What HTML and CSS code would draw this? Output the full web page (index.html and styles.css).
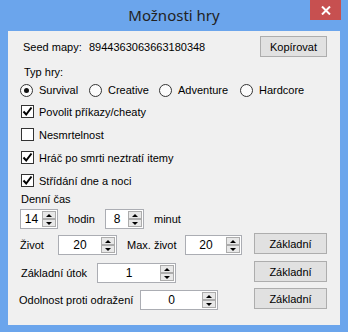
FILE: index.html
```html
<!DOCTYPE html>
<html lang="cs">
<head>
  <meta charset="UTF-8" />
  <title>Možnosti hry</title>
  <link rel="stylesheet" href="styles.css">
</head>
<body>
  <div class="window">
    <div class="titlebar">
      <span class="title">Možnosti hry</span>
      <span class="close">
        <svg width="10" height="9" viewBox="0 0 10 9"><path d="M1 0.5 L9 8.5 M9 0.5 L1 8.5" stroke="#fff" stroke-width="2"/></svg>
      </span>
    </div>

    <div class="client">
      <div class="row seed-row">
        <span class="seed-label">Seed mapy:</span>
        <span class="seed-value">8944363063663180348</span>
        <button class="btn btn-copy">Kopírovat</button>
      </div>

      <div class="caption type-caption">Typ hry:</div>
      <div class="row radio-row">
        <label class="radio r-survival"><span class="dot checked"></span>Survival</label>
        <label class="radio r-creative"><span class="dot"></span>Creative</label>
        <label class="radio r-adventure"><span class="dot"></span>Adventure</label>
        <label class="radio"><span class="dot"></span>Hardcore</label>
      </div>

      <div class="checks">
        <label class="check"><span class="box"><svg width="11" height="11" viewBox="0 0 11 11"><path d="M1.5 5.5 L4.2 8.5 L9.5 1.5" fill="none" stroke="#000" stroke-width="2"/></svg></span>Povolit příkazy/cheaty</label>
        <label class="check"><span class="box"></span>Nesmrtelnost</label>
        <label class="check"><span class="box"><svg width="11" height="11" viewBox="0 0 11 11"><path d="M1.5 5.5 L4.2 8.5 L9.5 1.5" fill="none" stroke="#000" stroke-width="2"/></svg></span>Hráč po smrti neztratí itemy</label>
        <label class="check"><span class="box"><svg width="11" height="11" viewBox="0 0 11 11"><path d="M1.5 5.5 L4.2 8.5 L9.5 1.5" fill="none" stroke="#000" stroke-width="2"/></svg></span>Střídání dne a noci</label>
      </div>

      <div class="caption time-caption">Denní čas</div>
      <div class="row time-row">
        <span class="spin w-hours"><span class="spin-val">14</span><span class="spin-btns"><span class="up"></span><span class="down"></span></span></span>
        <span class="unit">hodin</span>
        <span class="spin w-minutes"><span class="spin-val">8</span><span class="spin-btns"><span class="up"></span><span class="down"></span></span></span>
        <span class="unit">minut</span>
      </div>

      <div class="row stat-row life-row">
        <div class="field">
          <span class="lbl l-life">Život</span>
          <span class="spin w-life"><span class="spin-val">20</span><span class="spin-btns"><span class="up"></span><span class="down"></span></span></span>
          <span class="lbl l-max">Max. život</span>
          <span class="spin w-max"><span class="spin-val">20</span><span class="spin-btns"><span class="up"></span><span class="down"></span></span></span>
        </div>
        <button class="btn btn-reset">Základní</button>
      </div>

      <div class="row stat-row attack-row">
        <div class="field">
          <span class="lbl l-attack">Základní útok</span>
          <span class="spin w-attack"><span class="spin-val">1</span><span class="spin-btns"><span class="up"></span><span class="down"></span></span></span>
        </div>
        <button class="btn btn-reset">Základní</button>
      </div>

      <div class="row stat-row knock-row">
        <div class="field">
          <span class="lbl l-knock">Odolnost proti odražení</span>
          <span class="spin w-knock"><span class="spin-val">0</span><span class="spin-btns"><span class="up"></span><span class="down"></span></span></span>
        </div>
        <button class="btn btn-reset">Základní</button>
      </div>
    </div>
  </div>
</body>
</html>
```

FILE: styles.css
```css
body {
  margin: 0;
  font-family: "Liberation Sans", Arial, sans-serif;
  font-size: 11px;
  color: #000;
}
.window {
  width: 348px;
  height: 332px;
  background: #6ba5ec;
  display: flex;
  flex-direction: column;
  box-sizing: border-box;
}
.titlebar {
  height: 31px;
  position: relative;
  display: flex;
  justify-content: center;
  align-items: center;
}
.title {
  font-family: "Noto Sans", "Open Sans", sans-serif;
  font-size: 15px;
  color: #222;
  margin-top: -1px;
}
.close {
  position: absolute;
  top: 0;
  right: 7px;
  width: 31px;
  height: 20px;
  background: #c75050;
  display: flex;
  align-items: center;
  justify-content: center;
}
.client {
  margin: 0 8px 7px 8px;
  height: 294px;
  background: #f0f0f0;
  overflow: hidden;
}
.row {
  display: flex;
  align-items: center;
}
.btn {
  font-family: "Liberation Sans", Arial, sans-serif;
  font-size: 11px;
  color: #000;
  background: #e1e1e1;
  border: 1px solid #adadad;
  height: 21px;
  padding: 0;
  box-sizing: border-box;
}

/* seed */
.seed-row {
  margin-top: 5px;
  height: 21px;
  padding-left: 15px;
}
.seed-label {
  width: 66px;
}
.btn-copy {
  margin-left: auto;
  margin-right: 13px;
  width: 67px;
}

/* game type */
.caption {
  line-height: 13px;
  padding-left: 16px;
}
.type-caption {
  margin-top: 9px;
}
.radio-row {
  margin-top: 4px;
  height: 14px;
  padding-left: 12px;
}
.radio {
  display: flex;
  align-items: center;
}
.dot {
  width: 13px;
  height: 13px;
  box-sizing: border-box;
  border: 1px solid #333;
  border-radius: 50%;
  background: #fbfbfb;
  margin-right: 6px;
  display: flex;
  align-items: center;
  justify-content: center;
}
.dot.checked::after {
  content: "";
  width: 5px;
  height: 5px;
  border-radius: 50%;
  background: #111;
}
.r-survival { width: 69px; }
.r-creative { width: 70px; }
.r-adventure { width: 81px; }

/* checkboxes */
.checks {
  margin-top: 3px;
  padding-left: 13px;
}
.check {
  display: flex;
  align-items: center;
  height: 23px;
}
.box {
  width: 13px;
  height: 13px;
  box-sizing: border-box;
  border: 1px solid #333;
  background: #fff;
  margin-right: 5px;
  display: flex;
  align-items: center;
  justify-content: center;
}

/* time */
.time-caption {
  margin-top: 1px;
  padding-left: 13px;
}
.time-row {
  margin-top: 3px;
  height: 20px;
  padding-left: 12px;
}
.unit {
  margin-left: 10px;
  width: 37px;
}

/* numeric spinners */
.spin {
  display: flex;
  height: 20px;
  box-sizing: border-box;
  border: 1px solid #abadb3;
  background: #fff;
}
.spin-val {
  flex: 1;
  text-align: center;
  line-height: 18px;
  font-size: 12px;
}
.spin-btns {
  width: 15px;
  display: flex;
  flex-direction: column;
  padding: 1px 1px 1px 0;
  box-sizing: border-box;
}
.up, .down {
  flex: 1;
  background: #e8e8e8;
  border: 1px solid #acacac;
  display: flex;
  align-items: center;
  justify-content: center;
}
.up::after {
  content: "";
  border-left: 3px solid transparent;
  border-right: 3px solid transparent;
  border-bottom: 3px solid #000;
}
.down::after {
  content: "";
  border-left: 3px solid transparent;
  border-right: 3px solid transparent;
  border-top: 3px solid #000;
}
.w-hours { width: 38px; }
.w-minutes { width: 39px; }
.w-life { width: 59px; }
.w-max { width: 57px; }
.w-attack { width: 79px; }
.w-knock { width: 78px; }

/* stat rows */
.stat-row {
  height: 22px;
  padding-left: 12px;
  padding-right: 13px;
  align-items: stretch;
}
.stat-row .btn-reset {
  margin-left: auto;
  width: 73px;
  align-self: flex-start;
}
.field {
  display: flex;
  align-items: center;
  height: 20px;
  align-self: flex-end;
}
.life-row { margin-top: 4px; }
.attack-row { margin-top: 6px; }
.knock-row { margin-top: 5px; }
.l-life { width: 38px; }
.l-max { margin-left: 10px; width: 58px; }
.l-attack { width: 76px; padding-left: 1px; }
.l-knock { width: 121px; padding-left: -1px; margin-left: -1px; }
```
